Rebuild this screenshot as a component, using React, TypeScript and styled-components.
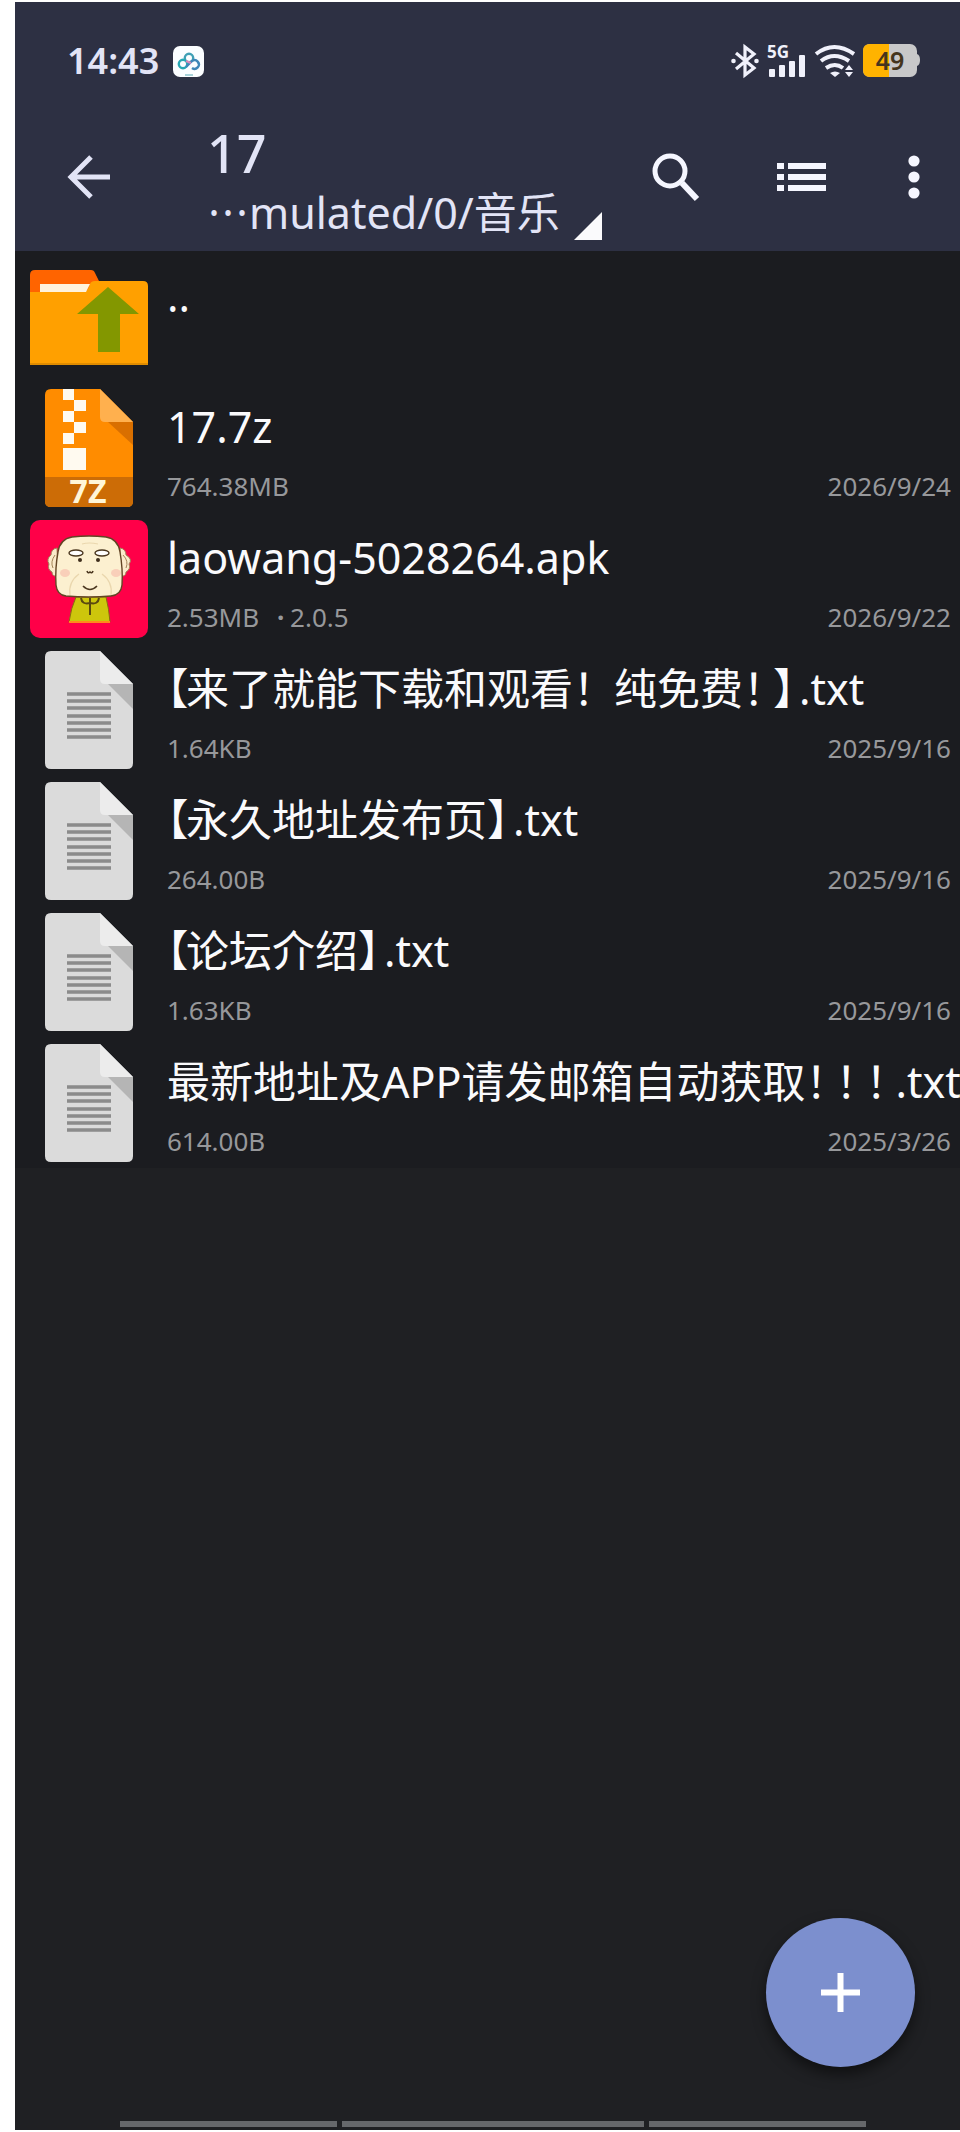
import React from 'react';
import styled, { createGlobalStyle } from 'styled-components';

const GlobalStyle = createGlobalStyle`
  * { box-sizing: border-box; }
  body {
    margin: 0;
    background: #ffffff;
    font-family: "Noto Sans", "Noto Sans CJK SC", sans-serif;
  }
  button { font: inherit; color: inherit; background: none; border: 0; padding: 0; cursor: pointer; }
  a { color: inherit; text-decoration: none; }
  svg { display: block; flex: none; overflow: visible; }
`;

const Page = styled.div`
  min-height: 100vh;
  padding: 2px 0 2px 15px;
  display: flex;
  overflow: hidden;
`;

const Screen = styled.div`
  flex: 1;
  min-width: 0;
  display: flex;
  flex-direction: column;
  background: #1f2023;
`;

const Header = styled.header`
  background: #2d3043;
  color: #e2e4f6;
`;

const StatusBar = styled.div`
  height: 118px;
  padding: 0 39px 0 52px;
  display: flex;
  align-items: center;
  justify-content: space-between;
`;

const StatusGroup = styled.div<{ $gap: number }>`
  display: flex;
  align-items: center;
  gap: ${(p) => p.$gap}px;
`;

const Clock = styled.time`
  font-size: 36px;
  font-weight: 600;
  line-height: 40px;
`;

const Toolbar = styled.div`
  height: 131px;
  padding: 0 34px 18px 48px;
  display: flex;
  align-items: center;
`;

const IconButton = styled.button<{ $width: number }>`
  width: ${(p) => p.$width}px;
  height: 52px;
  display: flex;
  align-items: center;
  justify-content: center;
  color: #f5f6ff;
`;

const PathButton = styled.button`
  margin: 0 auto 0 92px;
  padding-top: 10px;
  display: flex;
  align-items: flex-end;
  gap: 14px;
  text-align: left;
`;

const TitleBlock = styled.span`
  display: flex;
  flex-direction: column;
`;

const Title = styled.span`
  font-size: 52px;
  font-weight: 500;
  line-height: 62px;
`;

const Path = styled.span`
  font-size: 43px;
  line-height: 58px;
`;

const PathDot = styled.span`
  display: inline-block;
  width: 14px;
  text-align: center;
`;

const Actions = styled.div`
  display: flex;
  align-items: center;
  gap: 74px;
`;

const FileList = styled.ul`
  list-style: none;
  margin: 0;
  padding: 0;
  background: #1b1c20;
`;

const Row = styled.a`
  height: 131px;
  padding: 0 9px 0 15px;
  display: flex;
  align-items: center;
  gap: 19px;
`;

const RowText = styled.span`
  flex: 1;
  min-width: 0;
  align-self: stretch;
  padding-top: 15px;
  display: flex;
  flex-direction: column;
  gap: 11px;
`;

const FileName = styled.span`
  color: #fafafc;
  font-size: 43px;
  line-height: 60px;
  white-space: nowrap;
`;

const Mark = styled.span<{ $width: number }>`
  display: inline-block;
  width: ${(p) => p.$width}px;
  font-feature-settings: "halt";
`;

const Meta = styled.span`
  display: flex;
  color: #97989b;
  font-size: 26px;
  line-height: 36px;
`;

const Version = styled.span`
  display: flex;
  margin-left: 18px;
`;

const Dot = styled.span`
  width: 13px;
  font-weight: 700;
`;

const FileDate = styled.time`
  margin-left: auto;
`;

const Fab = styled.button`
  align-self: flex-end;
  margin: auto 45px 0 0;
  width: 149px;
  height: 149px;
  border-radius: 50%;
  background: #7c8fce;
  display: flex;
  align-items: center;
  justify-content: center;
  box-shadow: 0 7px 14px rgba(0, 0, 0, 0.5);
`;

const NavBar = styled.div`
  margin: 54px 94px 0 105px;
  padding-bottom: 3px;
  display: flex;
  gap: 5px;
`;

const NavSegment = styled.span<{ $grow: number }>`
  flex: ${(p) => p.$grow} 1 0;
  height: 6px;
  background: #66686b;
`;

const FolderUpIcon = () => (
  <svg width="118" height="118" viewBox="0 0 118 118" aria-hidden="true">
    <path d="M0 17q0-5 5-5h56q3 0 4 3l7 14-15 7H0z" fill="#ff6400" />
    <path d="M0 34h53q4 0 6-5l1-3q1-3 5-3h48q5 0 5 5v79H0z" fill="#ffa000" />
    <path d="M10 26h50l-4 8H10z" fill="#fff3dc" />
    <path d="M0 105h118v2H0z" fill="#e08c00" />
    <path d="M78 29l31 27H90v38H68V56H47z" fill="#839700" />
  </svg>
);

const SevenZipIcon = () => (
  <svg width="118" height="118" viewBox="0 0 118 118" aria-hidden="true">
    <path d="M15 6q0-6 6-6h49l33 33v79q0 6-6 6H21q-6 0-6-6z" fill="#ff8c00" />
    <path d="M78 33h25v23z" fill="#d96f00" />
    <path d="M70 0l33 33H75q-5 0-5-5z" fill="#ffb04e" />
    <path d="M15 88h88v24q0 6-6 6H21q-6 0-6-6z" fill="#cc6c06" />
    <path d="M33 0h11v11H33zM44 11h12v11H44zM33 22h11v11H33zM44 33h12v11H44zM33 44h11v11H33zM33 59h23v22H33z" fill="#fffaf0" />
    <text x="58" y="114" textAnchor="middle" fill="#fff6d8" fontFamily="Noto Sans" fontWeight="700" fontSize="32">7Z</text>
  </svg>
);

const ApkIcon = () => (
  <svg width="118" height="118" viewBox="0 0 118 118" aria-hidden="true">
    <rect width="118" height="118" rx="10" fill="#ff0048" />
    <path d="M46 77h30q3 12 4 25H39q2-14 7-25z" fill="#cdc60c" stroke="#8a6a10" strokeWidth="1" />
    <path d="M39 101h41v2H39z" fill="#ff8a1c" />
    <path d="M27 28q-6 1-6 7-5 4-2 9-2 5 3 8 0 5 6 4zM90 28q6 1 6 7 7 4 3 9 2 5-3 8 0 5-6 4z" fill="#fbeacb" stroke="#a28458" strokeWidth="1" />
    <path d="M25 35q-5 7-2 13M93 35q6 6 3 13" fill="none" stroke="#a28458" strokeWidth="1" />
    <path d="M42 17q17-2 34 0 12 2 14 15 3 17 2 33-1 10-11 11-22 2-45 0-9-1-10-11-1-17 2-33 2-13 14-15z" fill="#fcf0d0" stroke="#624424" strokeWidth="1.4" />
    <ellipse cx="35" cy="53" rx="5" ry="4" fill="#f9cfb9" />
    <ellipse cx="86" cy="53" rx="5" ry="4" fill="#f9cfb9" />
    <ellipse cx="46" cy="33" rx="7" ry="3" fill="#fff" stroke="#4b371f" strokeWidth="1.4" />
    <ellipse cx="72" cy="33" rx="7" ry="3" fill="#fff" stroke="#4b371f" strokeWidth="1.4" />
    <circle cx="50" cy="40" r="2" fill="#3e2e1c" />
    <circle cx="68" cy="40" r="2" fill="#3e2e1c" />
    <path d="M57 51q1 3 3 1 2 2 3-1M53 66q7 7 14 0" fill="none" stroke="#4b371f" strokeWidth="1.6" />
    <path d="M49 54q-11 8-9 21M72 54q11 8 9 21M52 24q7-2 16 0" fill="none" stroke="#ead7ae" strokeWidth="1.2" />
    <path d="M51 78q1 7 9 5 8 2 9-5M60 78v17" fill="none" stroke="#5b4a10" strokeWidth="2" />
  </svg>
);

const TextFileIcon = () => (
  <svg width="118" height="118" viewBox="0 0 118 118" aria-hidden="true">
    <path d="M15 6q0-6 6-6h49l33 33v79q0 6-6 6H21q-6 0-6-6z" fill="#dbdbdb" />
    <path d="M78 33h25v25z" fill="#b5b5b5" />
    <path d="M70 0l33 33H75q-5 0-5-5z" fill="#ececec" />
    <path d="M37 43h44M37 50h44M37 57h44M37 65h44M37 72h44M37 79h44M37 86h44" stroke="#8b8b8b" strokeWidth="3.4" />
  </svg>
);

const BackIcon = () => (
  <svg width="44" height="44" viewBox="0 0 44 44" fill="none" stroke="#e2e4f6" strokeWidth="5" aria-hidden="true">
    <path d="M43 22H5M24 2L4 22l20 20" />
  </svg>
);

const SearchIcon = () => (
  <svg width="48" height="48" viewBox="0 0 48 48" fill="none" stroke="currentColor" aria-hidden="true">
    <circle cx="18" cy="18" r="15" strokeWidth="5" />
    <path d="M30 30l15 16" strokeWidth="6" />
  </svg>
);

const ListIcon = () => (
  <svg width="50" height="30" viewBox="0 0 50 30" fill="currentColor" aria-hidden="true">
    <path d="M0 1h7v6H0zM11 1h38v6H11zM0 12h7v6H0zM11 12h38v6H11zM0 23h7v6H0zM11 23h38v6H11z" />
  </svg>
);

const MoreIcon = () => (
  <svg width="12" height="44" viewBox="0 0 12 44" fill="currentColor" aria-hidden="true">
    <circle cx="6" cy="6" r="5.6" />
    <circle cx="6" cy="22" r="5.6" />
    <circle cx="6" cy="38" r="5.6" />
  </svg>
);

const CornerIcon = () => (
  <svg width="29" height="44" viewBox="0 0 29 44" aria-hidden="true">
    <path d="M28 14v28H0z" fill="#fafafc" />
  </svg>
);

const CloudAppIcon = () => (
  <svg width="31" height="31" viewBox="0 0 31 31" fill="none" strokeWidth="2.4" aria-hidden="true">
    <rect width="31" height="31" rx="7" fill="#fbfdff" />
    <circle cx="16" cy="12" r="4.2" stroke="#3f9fb5" />
    <circle cx="10" cy="18" r="4.2" stroke="#27a7b4" />
    <path d="M13 21l6-6a4.300 4.300 0 1 1 0 7" stroke="#3f86b8" />
    <path d="M13 15l5 2" stroke="#d987b8" />
    <path d="M12 29h8" stroke="#8cc3cc" strokeWidth="1.500" />
  </svg>
);

const BluetoothIcon = () => (
  <svg width="28" height="32" viewBox="0 0 28 32" fill="none" stroke="#f0f1fb" strokeWidth="3.200" aria-hidden="true">
    <path d="M5 8l18 15-9 7V2l9 7L5 24" />
    <circle cx="2.500" cy="16" r="2.300" fill="#f0f1fb" stroke="none" />
    <circle cx="25.500" cy="16" r="2.300" fill="#f0f1fb" stroke="none" />
  </svg>
);

const SignalIcon = () => (
  <svg width="40" height="32" viewBox="0 0 40 32" fill="#f0f1fb" aria-hidden="true">
    <text x="0" y="13" fontFamily="Noto Sans" fontWeight="700" fontSize="17">5G</text>
    <rect x="2" y="24" width="6" height="8" rx="1" />
    <rect x="12" y="20" width="6" height="12" rx="1" />
    <rect x="22" y="16" width="6" height="16" rx="1" />
    <rect x="32" y="10" width="6" height="22" rx="1" />
  </svg>
);

const WifiIcon = () => (
  <svg width="40" height="32" viewBox="0 0 40 32" fill="none" stroke="#f0f1fb" strokeWidth="4" aria-hidden="true">
    <path d="M1 9q18-14 38 0M6 16q13-10 28 0M11 23q9-6 17 0" />
    <path d="M15 28q5-3 10 0l-5 4z" fill="#f0f1fb" stroke="none" />
    <path d="M30 25l4-5 4 5zM30 27h8l-4 5z" fill="#f0f1fb" stroke="none" />
  </svg>
);

const BatteryIcon = () => (
  <svg width="58" height="34" viewBox="0 0 58 34" role="img" aria-label="49%">
    <rect width="54" height="33" rx="7" fill="#c8c8c9" />
    <path d="M7 0h19v33H7Q0 33 0 26V7Q0 0 7 0z" fill="#ffb300" />
    <path d="M54 10q3 1 3 6t-3 6z" fill="#c8c8c9" />
    <text x="27" y="26" textAnchor="middle" fontFamily="Noto Sans" fontWeight="600" fontSize="25" fill="#45351c">49</text>
  </svg>
);

const PlusIcon = () => (
  <svg width="39" height="39" viewBox="0 0 39 39" stroke="#ffffff" strokeWidth="6" aria-hidden="true">
    <path d="M19.500 0v39M0 19.500h39" />
  </svg>
);

const OpenBracket = () => <Mark $width={19}>【</Mark>;
const CloseBracket = () => <Mark $width={26}>】</Mark>;
const Exclaim = () => <Mark $width={30}>！</Mark>;

interface FileEntry {
  icon: React.ReactNode;
  name: React.ReactNode;
  size?: string;
  version?: string;
  date?: string;
}

const files: FileEntry[] = [
  { icon: <FolderUpIcon />, name: '..' },
  { icon: <SevenZipIcon />, name: '17.7z', size: '764.38MB', date: '2026/9/24' },
  { icon: <ApkIcon />, name: 'laowang-5028264.apk', size: '2.53MB', version: '2.0.5', date: '2026/9/22' },
  {
    icon: <TextFileIcon />,
    name: <><OpenBracket />来了就能下载和观看<Mark $width={41}>！</Mark>纯免费<Exclaim /><CloseBracket />.txt</>,
    size: '1.64KB',
    date: '2025/9/16',
  },
  { icon: <TextFileIcon />, name: <><OpenBracket />永久地址发布页<CloseBracket />.txt</>, size: '264.00B', date: '2025/9/16' },
  { icon: <TextFileIcon />, name: <><OpenBracket />论坛介绍<CloseBracket />.txt</>, size: '1.63KB', date: '2025/9/16' },
  {
    icon: <TextFileIcon />,
    name: <>最新地址及APP请发邮箱自动获取<Exclaim /><Exclaim /><Exclaim />.txt</>,
    size: '614.00B',
    date: '2025/3/26',
  },
];

export default function App() {
  return (
    <>
      <GlobalStyle />
      <Page>
        <Screen>
          <Header>
            <StatusBar>
              <StatusGroup $gap={14}>
                <Clock>14:43</Clock>
                <CloudAppIcon />
              </StatusGroup>
              <StatusGroup $gap={8}>
                <BluetoothIcon />
                <SignalIcon />
                <WifiIcon />
                <BatteryIcon />
              </StatusGroup>
            </StatusBar>
            <Toolbar>
              <IconButton $width={52} aria-label="返回"><BackIcon /></IconButton>
              <PathButton>
                <TitleBlock>
                  <Title>17</Title>
                  <Path><PathDot>·</PathDot><PathDot>·</PathDot><PathDot>·</PathDot>mulated/0/音乐</Path>
                </TitleBlock>
                <CornerIcon />
              </PathButton>
              <Actions>
                <IconButton $width={52} aria-label="搜索"><SearchIcon /></IconButton>
                <IconButton $width={52} aria-label="列表视图"><ListIcon /></IconButton>
                <IconButton $width={24} aria-label="更多"><MoreIcon /></IconButton>
              </Actions>
            </Toolbar>
          </Header>
          <FileList>
            {files.map((f, i) => (
              <li key={i}>
                <Row href="#">
                  {f.icon}
                  <RowText>
                    <FileName>{f.name}</FileName>
                    {f.size && (
                      <Meta>
                        <span>{f.size}</span>
                        {f.version && <Version><Dot>·</Dot>{f.version}</Version>}
                        <FileDate>{f.date}</FileDate>
                      </Meta>
                    )}
                  </RowText>
                </Row>
              </li>
            ))}
          </FileList>
          <Fab aria-label="新建"><PlusIcon /></Fab>
          <NavBar>
            <NavSegment $grow={217} />
            <NavSegment $grow={302} />
            <NavSegment $grow={217} />
          </NavBar>
        </Screen>
      </Page>
    </>
  );
}
